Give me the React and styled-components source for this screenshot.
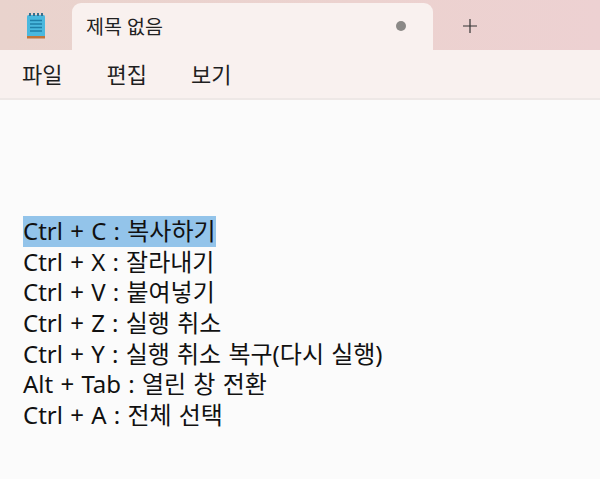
import React from 'react';
import styled, { createGlobalStyle } from 'styled-components';

const GlobalStyle = createGlobalStyle`
    html, body {
        margin: 0;
        padding: 0;
        background: #fbfbfb;
    }
`;

const Window = styled.div`
    width: 600px;
    height: 479px;
    overflow: hidden;
    display: flex;
    flex-direction: column;
    background: #fbfbfb;
    color: #1b1b1b;
    font-family: 'Noto Sans', 'Noto Sans CJK KR', sans-serif;
`;

const TabBar = styled.div`
    height: 47px;
    padding-top: 3px;
    display: flex;
    background: linear-gradient(90deg, #e9d3cd 0%, #ecd2cf 60%, #edd1d2 100%);
`;

const AppIconBox = styled.div`
    width: 72px;
    display: flex;
    justify-content: center;
    padding: 9px 1px 0 0;
    box-sizing: border-box;
`;

const Tab = styled.div`
    width: 361px;
    margin-right: 12px;
    box-sizing: border-box;
    padding: 0 27px 2px 14px;
    display: flex;
    align-items: center;
    justify-content: space-between;
    background: #f9f1ef;
    border-radius: 9px 9px 0 0;
`;

const TabTitle = styled.span`
    font-size: 19.5px;
    color: #222;
`;

const Dot = styled.span`
    width: 10px;
    height: 10px;
    border-radius: 50%;
    background: #8b8987;
`;

const NewTab = styled.div`
    width: 50px;
    display: flex;
    align-items: center;
    justify-content: center;
    padding-bottom: 2px;
`;

const MenuBar = styled.div`
    height: 50px;
    display: flex;
    align-items: center;
    gap: 44px;
    padding: 0 22px 2px;
    box-sizing: border-box;
    background: #f9f1ef;
    border-bottom: 2px solid #eee8e6;
`;

const MenuItem = styled.span`
    font-size: 22px;
    color: #1f1f1f;
`;

const Editor = styled.div`
    flex: 1;
    padding: 116px 23px 0;
`;

const Line = styled.div`
    height: 30.67px;
    line-height: 30.67px;
    font-size: 24px;
    word-spacing: 1px;
    white-space: nowrap;
    color: #111;
`;

const Selected = styled.span`
    display: inline-block;
    background: ${(props) => (props.$active ? '#93c4ea' : 'transparent')};
`;

const lines = [
    'Ctrl + C : 복사하기',
    'Ctrl + X : 잘라내기',
    'Ctrl + V : 붙여넣기',
    'Ctrl + Z : 실행 취소',
    'Ctrl + Y : 실행 취소 복구(다시 실행)',
    'Alt + Tab : 열린 창 전환',
    'Ctrl + A : 전체 선택',
];

function NotepadIcon() {
    return (
        <svg width="20" height="28" viewBox="0 0 20 28">
            <rect x="1" y="3" width="18" height="22" rx="1.5" fill="#4ab8de" />
            <rect x="1" y="24" width="18" height="2.5" fill="#c2753a" />
            <rect x="3" y="1" width="2" height="3" fill="#3a6f8c" />
            <rect x="7" y="1" width="2" height="3" fill="#3a6f8c" />
            <rect x="11" y="1" width="2" height="3" fill="#3a6f8c" />
            <rect x="15" y="1" width="2" height="3" fill="#3a6f8c" />
            <path d="M4 8.5h12M4 12h12M4 15.5h12M4 19h12" stroke="#1f7fa8" strokeWidth="1.5" />
        </svg>
    );
}

function PlusIcon() {
    return (
        <svg width="16" height="16" viewBox="0 0 16 16">
            <path d="M8 1v14M1 8h14" stroke="#333" strokeWidth="1.2" />
        </svg>
    );
}

function App() {
    return (
        <Window>
            <GlobalStyle />
            <TabBar>
                <AppIconBox>
                    <NotepadIcon />
                </AppIconBox>
                <Tab>
                    <TabTitle>제목 없음</TabTitle>
                    <Dot />
                </Tab>
                <NewTab>
                    <PlusIcon />
                </NewTab>
            </TabBar>
            <MenuBar>
                <MenuItem>파일</MenuItem>
                <MenuItem>편집</MenuItem>
                <MenuItem>보기</MenuItem>
            </MenuBar>
            <Editor>
                {lines.map((text, i) => (
                    <Line key={text}>
                        <Selected $active={i === 0}>{text}</Selected>
                    </Line>
                ))}
            </Editor>
        </Window>
    );
}

export default App;
